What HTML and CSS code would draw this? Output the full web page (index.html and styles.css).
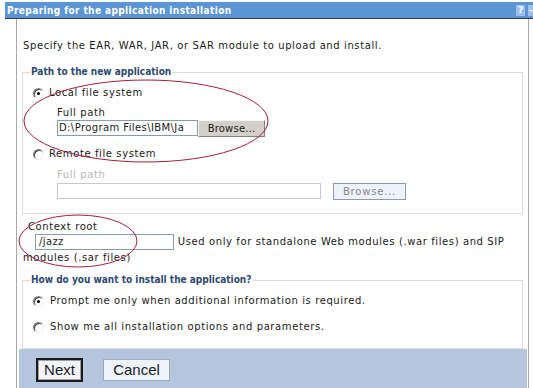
FILE: index.html
```html
<!DOCTYPE html>
<html>
<head>
<meta charset="utf-8">
<link rel="stylesheet" href="styles.css">
</head>
<body>
<div class="titlebar">
  <span class="title">Preparing for the application installation</span>
  <span class="tb-icons"><span class="tb-help">?</span><span class="tb-min">-</span></span>
</div>
<div class="panel">
  <p class="intro">Specify the EAR, WAR, JAR, or SAR module to upload and install.</p>
  <fieldset class="group group-path">
    <legend>Path to the new application</legend>
    <div class="radio-row"><span class="radio checked"></span><span>Local file system</span></div>
    <div class="sub">
      <div class="label">Full path</div>
      <div class="file-row">
        <span class="input input-local">D:\Program Files\IBM\Ja</span><span class="browse">Browse...</span>
      </div>
    </div>
    <div class="radio-row remote"><span class="radio"></span><span>Remote file system</span></div>
    <div class="sub sub-remote">
      <div class="label disabled">Full path</div>
      <div class="file-row">
        <span class="input input-remote"></span><span class="browse browse-disabled">Browse...</span>
      </div>
    </div>
  </fieldset>
  <div class="context">
    <div class="label ctx-label">Context root</div>
    <div class="ctx-line"><span class="input input-ctx">/jazz</span> <span class="ctx-help">Used only for standalone Web modules (.war files) and SIP</span><br><span class="ctx-help">modules (.sar files)</span></div>
  </div>
  <fieldset class="group group-how">
    <legend>How do you want to install the application?</legend>
    <div class="radio-row"><span class="radio checked"></span><span>Prompt me only when additional information is required.</span></div>
    <div class="radio-row second"><span class="radio"></span><span>Show me all installation options and parameters.</span></div>
  </fieldset>
  <div class="buttonbar">
    <span class="btn btn-next">Next</span>
    <span class="btn btn-cancel">Cancel</span>
  </div>
</div>
<svg class="marks" width="533" height="388" viewBox="0 0 533 388">
  <ellipse cx="146" cy="121" rx="122" ry="41" fill="none" stroke="#a51d3c" stroke-width="1"/>
  <ellipse cx="78" cy="241" rx="59" ry="26" fill="none" stroke="#a51d3c" stroke-width="1"/>
</svg>
</body>
</html>
```
FILE: styles.css
```css
html, body {
  margin: 0;
  padding: 0;
  background: #ffffff;
}
body {
  width: 533px;
  height: 388px;
  overflow: hidden;
  position: relative;
  font-family: "DejaVu Sans", Verdana, sans-serif;
  font-size: 10px;
  letter-spacing: 0.6px;
  color: #1a1a1a;
}
.titlebar {
  margin: 2px 0 0 5px;
  height: 16px;
  background: #5b95d6;
  border-bottom: 1px solid #2b3a52;
  display: flex;
  align-items: center;
  justify-content: space-between;
  padding-left: 2px;
  letter-spacing: 0;
}
.title {
  font-family: "DejaVu Sans Condensed", "DejaVu Sans", sans-serif;
  font-weight: bold;
  font-size: 10px;
  letter-spacing: 0.4px;
  color: #ffffff;
}
.tb-icons {
  display: flex;
  gap: 3px;
}
.tb-help, .tb-min {
  display: inline-block;
  width: 9px;
  height: 11px;
  background: #9cc0ea;
  color: #ffffff;
  font-weight: bold;
  font-size: 9px;
  line-height: 11px;
  text-align: center;
}
.tb-min {
  width: 5px;
}
.panel {
  margin-left: 16px;
  width: 508px;
  border-left: 1px solid #a8a8a8;
  border-right: 1px solid #a8a8a8;
  padding: 20px 1px 0 2px;
  height: 349px;
}
.intro {
  margin: 0 0 12px 4px;
  line-height: 14px;
}
.group {
  margin: 0 4px 0 3px;
  border: 1px solid #dcdcdc;
  padding: 0 10px 14px 10px;
  min-width: 0;
}
.group legend {
  font-family: "DejaVu Sans Condensed", "DejaVu Sans", sans-serif;
  font-weight: bold;
  font-size: 10px;
  letter-spacing: 0;
  color: #2e4a72;
  line-height: 14px;
  padding: 0 2px 0 1px;
  margin-left: -3px;
}
.radio-row {
  display: flex;
  align-items: center;
  gap: 5px;
  line-height: 14px;
}
.group-path .radio-row {
  margin-top: 7px;
}
.group-path .radio-row.remote {
  margin-top: 11px;
}
.group-how .radio-row {
  margin-top: 7px;
  gap: 6px;
}
.group-how .radio-row.second {
  margin-top: 12px;
}
.radio {
  width: 11px;
  height: 11px;
  border-radius: 50%;
  box-sizing: border-box;
  border: 1px solid;
  border-color: #808080 #f0f0f0 #f0f0f0 #808080;
  background: #ffffff;
  box-shadow: inset 1px 1px 0 #404040;
  position: relative;
  flex: none;
}
.radio.checked::after {
  content: "";
  position: absolute;
  left: 3px;
  top: 3px;
  width: 3px;
  height: 3px;
  border-radius: 50%;
  background: #000000;
}
.sub {
  padding-left: 24px;
}
.label {
  line-height: 14px;
  margin-top: 6px;
}
.sub-remote .label {
  margin-top: 7px;
}
.label.disabled {
  color: #b8b8b8;
}
.file-row {
  display: flex;
  align-items: center;
  height: 16px;
}
.sub-remote .file-row {
  margin-top: 1px;
}
.input {
  display: inline-block;
  box-sizing: border-box;
  height: 16px;
  border: 1px solid #7f9db9;
  background: #ffffff;
  line-height: 14px;
  padding-left: 1px;
  white-space: nowrap;
  overflow: hidden;
  letter-spacing: 0.4px;
}
.input-local {
  width: 141px;
}
.input-remote {
  width: 264px;
  border-color: #c8c8c8;
}
.browse {
  display: inline-block;
  box-sizing: border-box;
  height: 17px;
  line-height: 15px;
  width: 67px;
  text-align: center;
  background: #d4d0c8;
  border: 1px solid;
  border-color: #f4f4f4 #808080 #808080 #f4f4f4;
  color: #222222;
  letter-spacing: 0.2px;
}
.browse-disabled {
  margin-left: 12px;
  width: 73px;
  background: #eef2fa;
  border: 1px solid #8a9ab0;
  color: #8a8a8a;
  letter-spacing: 0.8px;
}
.context {
  margin: 6px 0 0 4px;
}
.ctx-label {
  margin: 0 0 0 5px;
}
.ctx-line {
  line-height: 16px;
  white-space: nowrap;
}
.input-ctx {
  width: 139px;
  margin-left: 12px;
  height: 16px;
  padding-left: 3px;
  line-height: 14px;
  vertical-align: top;
}
.group-how {
  margin-top: 7px;
  padding-bottom: 14px;
}
.buttonbar {
  background: #b4c6dd;
  height: 41px;
  display: flex;
  align-items: center;
  gap: 20px;
  padding-left: 17px;
  letter-spacing: 0;
}
.btn {
  display: inline-block;
  box-sizing: border-box;
  font-family: "Liberation Sans", Arial, sans-serif;
  font-size: 15px;
  color: #1c1c1c;
  text-align: center;
}
.btn-next {
  width: 47px;
  height: 24px;
  line-height: 20px;
  border: 2px solid #1a1a1a;
  box-shadow: inset 0 0 0 1px #a0a0a0;
  background: #f2f4fa;
}
.btn-cancel {
  width: 67px;
  height: 22px;
  line-height: 20px;
  border: 1px solid #9aa8bc;
  background: #eef3fc;
}
.marks {
  position: absolute;
  left: 0;
  top: 0;
  pointer-events: none;
}
```
